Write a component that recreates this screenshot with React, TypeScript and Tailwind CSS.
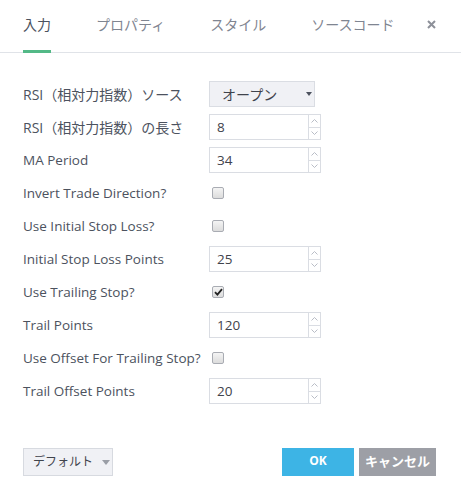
import React from 'react';

const jp = { fontFamily: '"Open Sans", "Noto Sans CJK JP", sans-serif' };

const Spinner = () => (
  <div className="flex flex-col w-[12px] border-l border-[#dadde3]">
    <div className="flex-1 flex items-center justify-center border-b border-[#dadde3]">
      <svg width="7" height="4" viewBox="0 0 7 4"><path d="M0.5 3.5 L3.5 0.5 L6.5 3.5" fill="none" stroke="#b9bdc6" strokeWidth="1" /></svg>
    </div>
    <div className="flex-1 flex items-center justify-center">
      <svg width="7" height="4" viewBox="0 0 7 4"><path d="M0.5 0.5 L3.5 3.5 L6.5 0.5" fill="none" stroke="#b9bdc6" strokeWidth="1" /></svg>
    </div>
  </div>
);

const NumInput = ({ value }: { value: string }) => (
  <div className="flex w-[112px] h-[26px] border border-[#dadde3] bg-white">
    <div className="flex-1 flex items-center pl-[7px] text-[13.5px] text-[#3f434c]">{value}</div>
    <Spinner />
  </div>
);

const Check = ({ checked }: { checked?: boolean }) => (
  <div className="ml-[3px] w-[12px] h-[12px] rounded-[2px] border border-[#a9acb3] bg-gradient-to-b from-[#f4f4f4] to-[#dcdcdc] flex items-center justify-center">
    {checked && (
      <svg width="9" height="8" viewBox="0 0 9 8"><path d="M1 4.2 L3.4 6.6 L8 1.2" fill="none" stroke="#222" strokeWidth="1.8" /></svg>
    )}
  </div>
);

type Row = { label: string; kind: 'select' | 'num' | 'check'; value?: string; checked?: boolean; jpLabel?: boolean };

const rows: Row[] = [
  { label: 'RSI（相対力指数）ソース', kind: 'select', value: 'オープン', jpLabel: true },
  { label: 'RSI（相対力指数）の長さ', kind: 'num', value: '8', jpLabel: true },
  { label: 'MA Period', kind: 'num', value: '34' },
  { label: 'Invert Trade Direction?', kind: 'check' },
  { label: 'Use Initial Stop Loss?', kind: 'check' },
  { label: 'Initial Stop Loss Points', kind: 'num', value: '25' },
  { label: 'Use Trailing Stop?', kind: 'check', checked: true },
  { label: 'Trail Points', kind: 'num', value: '120' },
  { label: 'Use Offset For Trailing Stop?', kind: 'check' },
  { label: 'Trail Offset Points', kind: 'num', value: '20' },
];

export default function App() {
  return (
    <div className="w-[461px] h-[500px] bg-white flex flex-col" style={jp}>
      <div className="flex items-stretch h-[53px] border-b border-[#e0e3e8] px-[23px]">
        <div className="flex gap-[45px] flex-1">
          <div className="flex items-center border-b-[3px] border-[#53b987] pb-[1px] text-[14px] text-[#4c525e] -mb-[1px]">入力</div>
          <div className="flex items-center pb-[3px] text-[14px] text-[#7f8591]">プロパティ</div>
          <div className="flex items-center pb-[3px] text-[14px] text-[#7f8591]">スタイル</div>
          <div className="flex items-center pb-[3px] text-[14px] text-[#7f8591]">ソースコード</div>
        </div>
        <div className="flex items-center pr-[2px] pb-[4px]">
          <svg width="9" height="9" viewBox="0 0 9 9"><path d="M1 1 L8 8 M8 1 L1 8" stroke="#8d9099" strokeWidth="2" /></svg>
        </div>
      </div>

      <div className="flex flex-col px-[23px] pt-[28px] gap-[7px]">
        {rows.map((r) => (
          <div key={r.label} className="flex items-center h-[26px]">
            <div className={`w-[186px] text-[#4c525e] whitespace-nowrap ${r.jpLabel ? 'text-[14px]' : 'text-[13.5px]'}`}>{r.label}</div>
            {r.kind === 'select' && (
              <div className="flex items-center justify-between w-[106px] h-[26px] border border-[#dadde3] bg-[#f0f1f5] pl-[12px] pr-[2px]">
                <span className="text-[14px] text-[#3f434c]">{r.value}</span>
                <span className="w-0 h-0 border-l-[3.5px] border-r-[3.5px] border-t-[4px] border-l-transparent border-r-transparent border-t-[#4c525e]" />
              </div>
            )}
            {r.kind === 'num' && <NumInput value={r.value!} />}
            {r.kind === 'check' && <Check checked={r.checked} />}
          </div>
        ))}
      </div>

      <div className="flex items-center justify-between px-[23px] mt-auto mb-[24px]">
        <div className="flex items-center gap-[9px] w-[90px] h-[28px] border border-[#d7dae0] bg-[#f0f1f5] pl-[9px] text-[12px] text-[#3f434c] whitespace-nowrap">
          デフォルト
          <span className="w-0 h-0 border-l-[4px] border-r-[4px] border-t-[5px] border-l-transparent border-r-transparent border-t-[#9a9ea6]" />
        </div>
        <div className="flex gap-[5px] mr-[2px]">
          <div className="w-[72px] h-[28px] bg-[#3db4e5] text-white text-[12px] font-bold flex items-center justify-center pb-[3px]">OK</div>
          <div className="w-[77px] h-[28px] bg-[#9d9fa6] text-white text-[13px] font-bold flex items-center justify-center">キャンセル</div>
        </div>
      </div>
    </div>
  );
}
